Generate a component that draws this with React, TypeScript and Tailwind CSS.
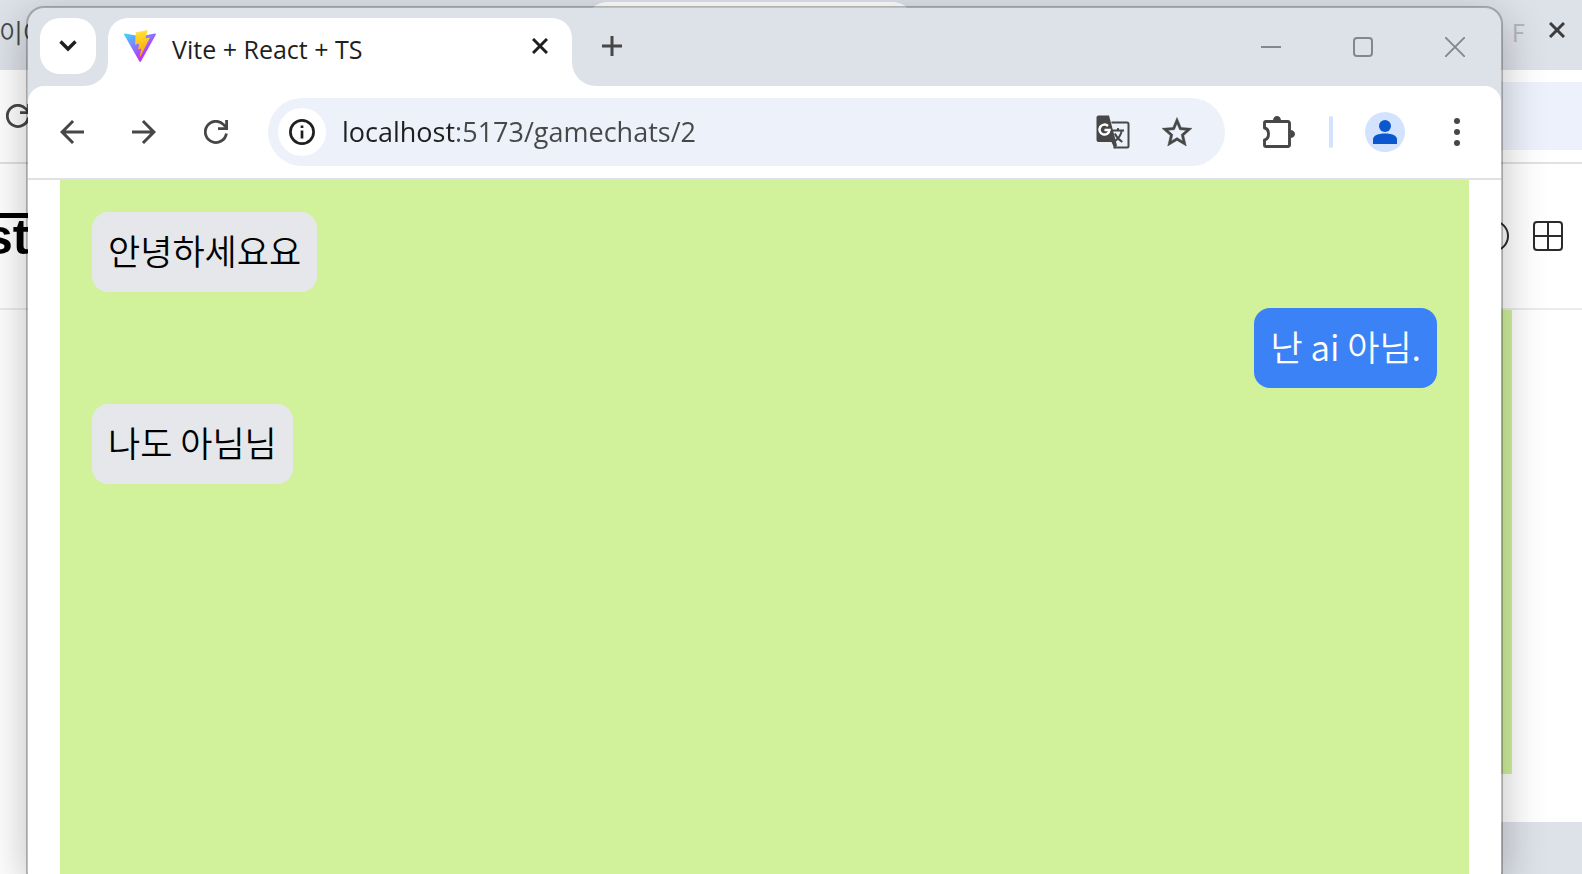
import type { ReactNode } from 'react';

const messages = [
  { id: 1, text: '안녕하세요요', mine: false },
  { id: 2, text: '난 ai 아님.', mine: true },
  { id: 3, text: '나도 아님님', mine: false },
];

function IconButton({ label, className = '', children }: { label: string; className?: string; children: ReactNode }) {
  return (
    <button type="button" aria-label={label} className={`flex shrink-0 items-center justify-center ${className}`}>
      {children}
    </button>
  );
}

function ViteLogo() {
  return (
    <svg viewBox="0 0 256 257" className="size-8 shrink-0" aria-hidden="true">
      <defs>
        <linearGradient id="viteBody" x1="-.828%" x2="57.636%" y1="7.652%" y2="78.411%">
          <stop offset="0%" stopColor="#41D1FF" />
          <stop offset="100%" stopColor="#BD34FE" />
        </linearGradient>
        <linearGradient id="viteBolt" x1="43.376%" x2="50.316%" y1="2.242%" y2="89.03%">
          <stop offset="0%" stopColor="#FFEA83" />
          <stop offset="8.333%" stopColor="#FFDD35" />
          <stop offset="100%" stopColor="#FFA800" />
        </linearGradient>
      </defs>
      <path
        fill="url(#viteBody)"
        d="M255.153 37.938L134.897 252.976c-2.483 4.44-8.862 4.466-11.382.048L.875 37.958c-2.746-4.814 1.371-10.646 6.827-9.67l120.385 21.517a6.537 6.537 0 0 0 2.322-.004l117.867-21.483c5.438-.991 9.574 4.796 6.877 9.62Z"
      />
      <path
        fill="url(#viteBolt)"
        d="M185.432.063L96.44 17.501a3.268 3.268 0 0 0-2.634 3.014l-5.474 92.456a3.268 3.268 0 0 0 3.997 3.378l24.777-5.718c2.318-.535 4.413 1.507 3.936 3.838l-7.361 36.047c-.495 2.426 1.782 4.5 4.151 3.78l15.304-4.649c2.372-.72 4.652 1.36 4.15 3.788l-11.698 56.621c-.732 3.542 3.979 5.473 5.943 2.437l1.313-2.028l72.516-144.72c1.215-2.423-.88-5.186-3.54-4.672l-25.505 4.922c-2.396.462-4.435-1.77-3.759-4.114l16.646-57.705c.677-2.35-1.37-4.583-3.769-4.113Z"
      />
    </svg>
  );
}

function CrossIcon({ className }: { className: string }) {
  return (
    <svg viewBox="0 0 16 16" className={`size-4 ${className}`} fill="none" stroke="currentColor" strokeWidth="3" aria-hidden="true">
      <path d="M1 1l14 14M15 1L1 15" />
    </svg>
  );
}

function ReloadIcon() {
  return (
    <svg viewBox="0 0 24 24" className="size-6 shrink-0" fill="none" stroke="#474747" strokeWidth="2.8" aria-hidden="true">
      <path d="M22.4 13.5A10.6 10.6 0 1 1 19.6 4.6L22.6 7.8" />
      <path d="M22.6 0v8.6H14" />
    </svg>
  );
}

function TranslateIcon() {
  return (
    <svg viewBox="0 0 34 34" className="size-[34px]" fill="none" aria-hidden="true">
      <path d="M15.5 7.500H31a1.500 1.500 0 0 1 1.500 1.500v22a1.500 1.500 0 0 1-1.500 1.500H17.5" stroke="#474747" strokeWidth="2" />
      <path d="M2.5 .5H13L21 30.5l-2.6 3L15.5 27H2.5a2 2 0 0 1-2-2V2.5a2 2 0 0 1 2-2z" fill="#474747" />
      <path d="M12 11a5 5 0 1 0 1.5 4H8.5" stroke="#fff" strokeWidth="2.5" />
      <path d="M16.5 15.5H28M22 13v2.5M25.8 15.5C25 20 22 24 18.5 26.5M18.8 18.5c1.6 3.5 4 6.2 7.5 8.5" stroke="#474747" strokeWidth="1.9" />
    </svg>
  );
}

function PuzzleIcon() {
  return (
    <svg viewBox="0 0 32 32" className="size-8" fill="none" aria-hidden="true">
      <path
        d="M1.5 12V7A1.5 1.5 0 0 1 3 5.500H25A1.5 1.5 0 0 1 26.5 7V29A1.5 1.5 0 0 1 25 30.5H3A1.5 1.5 0 0 1 1.5 29V23.8C4 23.3 5.5 21 5.5 18S4 12.5 1.5 12z"
        stroke="#474747"
        strokeWidth="2.9"
        strokeLinejoin="round"
      />
      <path d="M10 4.500a4 4.500 0 0 1 8 0zM27.500 14a4.500 4 0 0 1 0 8z" fill="#474747" />
    </svg>
  );
}

function BackgroundWindow() {
  return (
    <div className="flex h-full flex-col bg-white">
      <div className="flex h-[70px] shrink-0 items-start justify-between bg-[#dde1e8]">
        <span className="-ml-px mt-3 text-[26px] font-[350] text-[#474747]">이어</span>
        <div className="ml-[540px] mt-[2px] h-10 w-[326px] rounded-t-[20px] bg-white" />
        <div className="ml-auto mr-[17px] mt-[14px] flex h-8 items-center gap-6">
          <span className="flex items-center pt-1 text-2xl text-[#b4b6bb]">F</span>
          <IconButton label="뒤쪽 탭 닫기">
            <CrossIcon className="text-[#3c3c3c]" />
          </IconButton>
        </div>
      </div>
      <div className="flex h-[94px] shrink-0 items-center border-b-2 border-[#e1e1e1] pl-[6px]">
        <ReloadIcon />
        <div className="ml-8 h-[68px] flex-1 rounded-l-full bg-[#ecf1fb]" />
      </div>
      <div className="flex h-[146px] shrink-0 items-center justify-between border-b-2 border-[#ececec] pr-[19px]">
        <span className="-ml-[15px] border-t-[5px] border-black pb-1 font-['Liberation_Sans'] text-[50px] font-bold leading-[38px]">st</span>
        <div className="flex items-center gap-6">
          <svg viewBox="0 0 32 32" className="size-8" fill="none" stroke="#2b2b2e" strokeWidth="2" aria-hidden="true">
            <circle cx="16" cy="16" r="15" />
          </svg>
          <svg viewBox="0 0 30 30" className="size-[30px]" fill="none" stroke="#2b2b2e" strokeWidth="2" aria-hidden="true">
            <rect x="1" y="1" width="28" height="28" rx="3" />
            <path d="M15 1v28M1 15h28" />
          </svg>
        </div>
      </div>
      <div className="ml-16 mr-[70px] h-[464px] shrink-0 bg-[#d1f29b]" />
      <div className="ml-16 mt-12 flex-1 bg-[#dde1e8]" />
    </div>
  );
}

function TabStrip() {
  return (
    <div className="flex h-[78px] shrink-0 items-stretch">
      <div className="flex flex-1 items-end pl-3">
        <IconButton label="탭 검색" className="z-10 mb-3 size-14 rounded-[20px] bg-white">
          <svg viewBox="0 0 18 12" className="h-3 w-[18px]" fill="none" stroke="#1f1f1f" strokeWidth="3.4" aria-hidden="true">
            <path d="M1.5 1.5L9 9l7.500-7.500" />
          </svg>
        </IconButton>
        <div className="-ml-3 size-6 shrink-0 bg-white">
          <div className="size-6 rounded-br-[24px] bg-[#dde1e8]" />
        </div>
        <div className="flex h-[68px] w-[464px] items-start rounded-t-[20px] bg-white px-4">
          <div className="flex h-14 flex-1 items-center">
            <ViteLogo />
            <span className="ml-4 flex-1 pt-[6px] font-['Open_Sans','Noto_Sans_CJK_KR',sans-serif] text-[25px] leading-8 text-[#1f1f1f]">
              Vite + React + TS
            </span>
            <IconButton label="탭 닫기" className="size-8">
              <CrossIcon className="text-[#1f1f1f]" />
            </IconButton>
          </div>
        </div>
        <div className="size-6 shrink-0 bg-white">
          <div className="size-6 rounded-bl-[24px] bg-[#dde1e8]" />
        </div>
        <IconButton label="새 탭" className="-ml-3 mb-3 size-14">
          <svg viewBox="0 0 20 20" className="size-5" fill="none" stroke="#474747" strokeWidth="3" aria-hidden="true">
            <path d="M10 0v20M0 10h20" />
          </svg>
        </IconButton>
      </div>
      <div className="flex text-[#85878c]">
        <IconButton label="최소화" className="w-[92px]">
          <svg viewBox="0 0 20 20" className="size-5" stroke="currentColor" strokeWidth="2" aria-hidden="true">
            <path d="M0 10h20" />
          </svg>
        </IconButton>
        <IconButton label="최대화" className="w-[92px]">
          <svg viewBox="0 0 20 20" className="size-5" fill="none" stroke="currentColor" strokeWidth="2" aria-hidden="true">
            <rect x="1" y="1" width="18" height="18" rx="3" />
          </svg>
        </IconButton>
        <IconButton label="닫기" className="w-[92px]">
          <svg viewBox="0 0 20 20" className="size-5" fill="none" stroke="currentColor" strokeWidth="1.9" aria-hidden="true">
            <path d="M0 0l20 20M20 0L0 20" />
          </svg>
        </IconButton>
      </div>
    </div>
  );
}

function Toolbar() {
  return (
    <div className="flex h-[94px] shrink-0 items-center rounded-t-[16px] border-b-2 border-[#e1e1e3] bg-white px-2">
      <IconButton label="뒤로" className="h-12 w-[72px]">
        <svg viewBox="0 0 24 24" className="size-9" fill="#474747" aria-hidden="true">
          <path d="M20 11H7.830l5.590-5.590L12 4l-8 8 8 8 1.410-1.410L7.830 13H20v-2z" />
        </svg>
      </IconButton>
      <IconButton label="앞으로" className="h-12 w-[72px]">
        <svg viewBox="0 0 24 24" className="size-9" fill="#474747" aria-hidden="true">
          <path d="M4 11h12.170l-5.590-5.590L12 4l8 8-8 8-1.410-1.410L16.170 13H4v-2z" />
        </svg>
      </IconButton>
      <IconButton label="새로고침" className="h-12 w-[72px]">
        <ReloadIcon />
      </IconButton>
      <div className="ml-4 flex h-[68px] flex-1 items-center rounded-full bg-[#ecf1fa] pl-[10px] pr-[30px]">
        <IconButton label="사이트 정보 보기" className="size-12 rounded-full bg-white">
          <svg viewBox="0 0 26 26" className="size-[26px]" fill="none" stroke="#1f1f1f" strokeWidth="2.7" aria-hidden="true">
            <circle cx="13" cy="13" r="11.6" />
            <path d="M13 11.5v8M13 6.5v2.6" />
          </svg>
        </IconButton>
        <input
          type="text"
          aria-label="주소창"
          defaultValue="localhost:5173/gamechats/2"
          className="ml-4 min-w-0 flex-1 bg-[linear-gradient(to_right,#1f1f1f_112px,#474747_112px)] bg-clip-text font-['Open_Sans','Noto_Sans_CJK_KR',sans-serif] text-[27px] leading-9 text-transparent outline-none"
        />
        <IconButton label="이 페이지 번역하기" className="size-12">
          <TranslateIcon />
        </IconButton>
        <IconButton label="북마크에 추가" className="ml-[22px] size-9">
          <svg viewBox="0 0 24 24" className="size-[37px]" fill="#474747" aria-hidden="true">
            <path
              stroke="#474747"
              strokeWidth=".3"
              d="M22 9.240l-7.190-.620L12 2 9.190 8.630 2 9.240l5.460 4.730L5.820 21 12 17.270 18.180 21l-1.630-7.030L22 9.240zM12 15.400l-3.760 2.270 1-4.280-3.320-2.880 4.380-.380L12 6.100l1.710 4.040 4.380.380-3.320 2.880 1 4.280L12 15.400z"
            />
          </svg>
        </IconButton>
      </div>
      <IconButton label="확장 프로그램" className="ml-[18px] h-12 w-[72px]">
        <PuzzleIcon />
      </IconButton>
      <div className="ml-[14px] h-8 w-1 rounded-full bg-[#d3e3fd]" />
      <IconButton label="프로필" className="ml-8 size-10 rounded-full bg-[#d3e3fd]">
        <svg viewBox="0 0 40 40" className="size-10" fill="#0b57d0" aria-hidden="true">
          <circle cx="20" cy="14" r="6" />
          <path d="M8 32v-4.500C8 23.500 13 21.500 20 21.500s12 2 12 6V32z" />
        </svg>
      </IconButton>
      <IconButton label="Chrome 맞춤설정 및 제어" className="ml-4 h-12 w-[72px]">
        <svg viewBox="0 0 6 28" className="h-7 w-[6px]" fill="#474747" aria-hidden="true">
          <circle cx="3" cy="3" r="3" />
          <circle cx="3" cy="14" r="3" />
          <circle cx="3" cy="25" r="3" />
        </svg>
      </IconButton>
    </div>
  );
}

function ChatPage() {
  return (
    <main className="flex flex-1 bg-white px-8">
      <ul className="flex flex-1 flex-col gap-4 bg-[#d1f29b] p-8">
        {messages.map((m) => (
          <li
            key={m.id}
            className={`rounded-[16px] px-4 pb-[18px] pt-[14px] text-[35px] font-[350] leading-[48px] ${
              m.mine ? 'self-end bg-[#3b82f6] text-white' : 'self-start bg-[#e5e7eb] text-black'
            }`}
          >
            {m.text}
          </li>
        ))}
      </ul>
    </main>
  );
}

export default function App() {
  return (
    <div className="relative h-screen overflow-hidden font-['Noto_Sans_CJK_KR',sans-serif]">
      <BackgroundWindow />
      <div className="absolute bottom-0 left-[26px] right-[79px] top-[6px] flex flex-col overflow-hidden rounded-t-[18px] border-x-2 border-t-2 border-black/25 bg-[#dde1e8] bg-clip-padding shadow-[0_12px_44px_rgba(0,0,0,0.26)]">
        <TabStrip />
        <Toolbar />
        <ChatPage />
      </div>
    </div>
  );
}
